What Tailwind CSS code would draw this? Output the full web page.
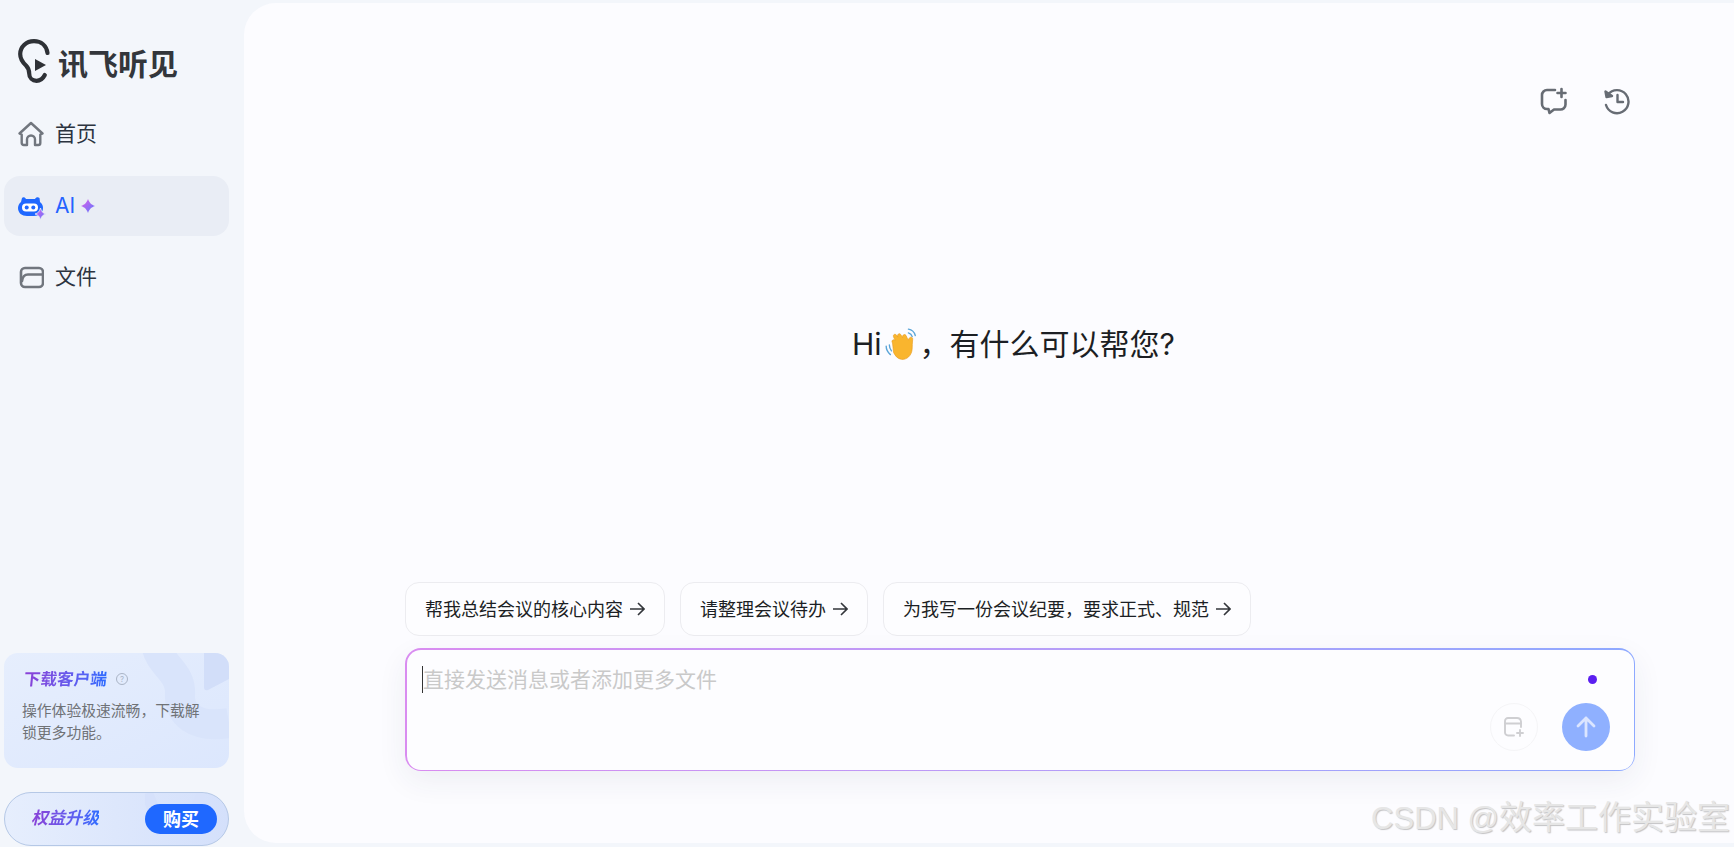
<!DOCTYPE html>
<html lang="zh-CN">
<head>
    <meta charset="UTF-8">
    <meta name="viewport" content="width=device-width, initial-scale=1.0">
    <title>讯飞听见</title>
    <script src="https://cdn.jsdelivr.net/npm/@tailwindcss/browser@4"></script>
</head>
<body class="bg-[#f3f6fb] font-['Inter','Noto_Sans_CJK_SC',sans-serif] overflow-hidden">
    <svg width="0" height="0" class="absolute">
        <defs>
            <linearGradient id="spark" x1="0" y1="0" x2="1" y2="1">
                <stop offset="0" stop-color="#e25be8"/>
                <stop offset="1" stop-color="#5a7bff"/>
            </linearGradient>
        </defs>
    </svg>

    <div class="relative flex h-[847px] w-[1734px]">
        <!-- Sidebar -->
        <aside class="flex w-[244px] shrink-0 flex-col pl-[4px] pr-[15px]">
            <div class="flex h-[44px] mt-[39px] items-center pl-[14px]">
                <svg class="h-[44px] w-[32px] shrink-0" viewBox="0 0 32 44" fill="none">
                    <path d="M29.5 14 C28.5 6.5 23 2.2 16 2.2 C8 2.2 2.2 8 2.2 15 C2.2 20 4.8 23.5 8 26.5 C10.5 29 11.2 31 11.2 34.5 C11.2 39 14.5 41.8 18.5 41.8 C22 41.8 25 39.5 26.8 36" stroke="#2e3136" stroke-width="4.2" stroke-linecap="round"/>
                    <path d="M17 20 L28 26 L17 32 Z" fill="#2e3136"/>
                </svg>
                <span class="ml-[8px] mt-[5px] text-[30px] leading-none font-bold text-[#33363b] whitespace-nowrap">讯飞听见</span>
            </div>

            <nav class="mt-[21px] flex flex-col">
                <a class="flex h-[60px] items-center pl-[14px] text-[21px] text-[#2c3440]">
                    <svg class="h-[26px] w-[26px] shrink-0" viewBox="0 0 26 26" fill="none" stroke="#71767e" stroke-width="2.4" stroke-linejoin="round" stroke-linecap="round">
                        <path d="M1.5 12.5 L13 2 L24.5 12.5 L22.3 13.6 V22 A2 2 0 0 1 20.3 24 H17 V18.5 A4 4 0 0 0 9 18.5 V24 H5.7 A2 2 0 0 1 3.7 22 V13.6 Z"/>
                    </svg>
                    <span class="ml-[11px]">首页</span>
                </a>
                <a class="mt-[12px] flex h-[60px] items-center rounded-[16px] bg-[#e9edf5] pl-[14px] text-[21px] text-[#2563ff]">
                    <svg class="h-[28px] w-[28px] shrink-0" viewBox="0 0 28 28">
                        <path d="M4 6 C5 4.5 7 5 8 7 H17 C18 5 20 4.5 21.5 6 L22 10 C24.5 12 25 14 25 16 C25 21 21 24 16 24 H9 C4 24 0 21 0 16 C0 14 1 11.5 3 10 Z" fill="#1f68ff"/>
                        <rect x="4" y="11.5" width="16" height="8" rx="4" fill="#fff"/>
                        <circle cx="8.7" cy="15.5" r="2" fill="#1f68ff"/>
                        <circle cx="15.3" cy="15.5" r="2" fill="#1f68ff"/>
                        <path d="M22.5 16 C23.5 19.5 24.5 21 28 22 C24.5 23 23.5 24.5 22.5 28 C21.5 24.5 20.5 23 17 22 C20.5 21 21.5 19.5 22.5 16 Z" fill="url(#spark)" stroke="#e9edf5" stroke-width=".8"/>
                    </svg>
                    <span class="ml-[9px]">AI</span>
                    <svg class="ml-[6px] h-[14px] w-[14px]" viewBox="0 0 14 14">
                        <path d="M7 0 C8.6 4 10 5.4 14 7 C10 8.6 8.6 10 7 14 C5.4 10 4 8.6 0 7 C4 5.4 5.4 4 7 0 Z" fill="url(#spark)"/>
                    </svg>
                </a>
                <a class="mt-[11px] flex h-[60px] items-center pl-[14px] text-[21px] text-[#2c3440]">
                    <svg class="h-[26px] w-[26px] shrink-0" viewBox="0 0 26 26" fill="none" stroke="#71767e" stroke-width="2.6" stroke-linejoin="round" stroke-linecap="round">
                        <rect x="3" y="4" width="22" height="19" rx="4"/>
                        <path d="M4 17 C4.5 13 6.5 10.5 10 10.5 H24"/>
                    </svg>
                    <span class="ml-[11px]">文件</span>
                </a>
            </nav>

            <!-- Download promo -->
            <div class="relative mt-auto h-[115px] overflow-hidden rounded-[14px] bg-linear-to-br from-[#e6eefd] to-[#dce7fd] pl-[19px] pt-[14px]">
                <svg class="absolute left-0 top-0 h-[115px] w-[225px]" viewBox="0 0 225 115" fill="none">
                    <path d="M152 -10 C154 12 178 18 176 42 C175 60 190 76 225 70" stroke="#d9e4fb" stroke-width="30"/>
                    <path d="M200 0 H225 V26 L204 37 Q200 38 200 34 Z" fill="#d2def9"/>
                </svg>
                <div class="relative flex items-center pl-[1px]">
                    <span class="inline-block -skew-x-6 bg-linear-to-r from-[#8a3fd6] to-[#2b6cff] bg-clip-text text-[16.6px] leading-[24px] font-bold text-transparent">下载客户端</span>
                    <span class="ml-[9px] flex h-[12px] w-[12px] items-center justify-center rounded-full border border-[#aab4c6] text-[8px] leading-none text-[#aab4c6]">?</span>
                </div>
                <p class="relative -ml-[1px] mt-[9px] w-[190px] text-[14.8px] leading-[22px] text-[#6f7276]">操作体验极速流畅，下载解锁更多功能。</p>
            </div>

            <!-- Upgrade pill -->
            <div class="relative mt-[24px] mb-[1px] flex h-[54px] items-center overflow-hidden rounded-full border border-[#b5c8e6] bg-linear-to-r from-[#e6eefd] to-[#d4e0fb] pl-[26px]">
                <svg class="absolute left-[140px] top-0 h-[52px] w-[60px]" viewBox="0 0 60 52" fill="none">
                    <path d="M2 0 L18 40 M58 0 L40 40" stroke="#d6e1fb" stroke-width="12"/>
                </svg>
                <span class="relative bg-linear-to-r from-[#8a3fd6] to-[#2b6cff] bg-clip-text text-[17px] font-bold text-transparent italic">权益升级</span>
                <span class="absolute right-[11px] top-[11px] flex h-[30px] w-[72px] items-center justify-center rounded-full bg-[#1f68ff] text-[18px] font-bold text-white">购买</span>
            </div>
        </aside>

        <!-- Main panel -->
        <main class="mt-[3px] mb-[4px] flex flex-1 flex-col rounded-l-[32px] bg-[#fcfcff] pl-[161px] pr-[99px]">
            <div class="flex justify-end gap-[35px] pt-[84px] pr-[4px]">
                <svg class="h-[28px] w-[28px]" viewBox="0 0 28 28" fill="none" stroke="#676c74" stroke-width="2.6" stroke-linecap="round" stroke-linejoin="round">
                    <path d="M15 3 H7 A5 5 0 0 0 2 8 V17 A5 5 0 0 0 7 22 H8.5 L9.5 26 L14 22.5 H20 A5 5 0 0 0 25.5 17.5 V13"/>
                    <path d="M21.5 2 V10 M17.5 6 H25.5"/>
                </svg>
                <svg class="h-[28px] w-[28px]" viewBox="0 0 28 28" fill="none" stroke="#676c74" stroke-width="2.4" stroke-linecap="round" stroke-linejoin="round">
                    <path d="M5 7.5 A11.5 11.5 0 1 1 3 18"/>
                    <path d="M2.5 4.5 L3.5 10 L9 9 Z" fill="#676c74"/>
                    <path d="M14.5 8 V15 H20"/>
                </svg>
            </div>

            <div class="mt-[207px] flex h-[44px] items-center justify-center pr-[13px] text-[30px] leading-none text-[#1c1f24]">
                <span>Hi</span>
                <svg class="ml-[1px] h-[36px] w-[36px]" viewBox="0 0 34 34" fill="none">
                    <path d="M3 19 C3 22 4.5 25 7 27 M6 18 C6 20 6.8 22 8 23.5" stroke="#5aa5d8" stroke-width="1.3" stroke-linecap="round"/>
                    <path d="M24 3 C27 3.5 29.5 5.5 30.5 9 M24 6.5 C25.8 7 27 8 27.6 10" stroke="#5aa5d8" stroke-width="1.3" stroke-linecap="round"/>
                    <path d="M9 16 C7.5 14 9.5 12 11.5 13.5 L10 10.5 C9 8 11.8 6.8 13 9 L14 10.5 C13 7.5 15.8 6 17 8.5 L18.5 11 C18 8 21 7 22 9.5 C23 11.5 23.2 12.5 24 13 C25 9.5 28.5 10 28 13 C27.5 16 27.8 19 27.5 22 C27 28 22.5 32 17.5 31.5 C13.5 31 11.5 28 10 25 Z" fill="#f9b52e" stroke="#e89a1c" stroke-width=".6"/>
                </svg>
                <span class="ml-[1px]">，有什么可以帮您?</span>
            </div>

            <div class="mt-[216px] flex gap-[15px]">
                <button class="flex h-[54px] items-center rounded-[14px] border border-[#ececf0] bg-[#fdfdff] pl-[19px] pr-[19px] text-[18px] whitespace-nowrap text-[#1c1f24]">帮我总结会议的核心内容
                    <svg class="ml-[6px] h-[16px] w-[16px]" viewBox="0 0 16 16" fill="none" stroke="#33363b" stroke-width="1.6"><path d="M1 8 H15 M9 2 L15 8 L9 14"/></svg>
                </button>
                <button class="flex h-[54px] items-center rounded-[14px] border border-[#ececf0] bg-[#fdfdff] pl-[19px] pr-[19px] text-[18px] whitespace-nowrap text-[#1c1f24]">请整理会议待办
                    <svg class="ml-[6px] h-[16px] w-[16px]" viewBox="0 0 16 16" fill="none" stroke="#33363b" stroke-width="1.6"><path d="M1 8 H15 M9 2 L15 8 L9 14"/></svg>
                </button>
                <button class="flex h-[54px] items-center rounded-[14px] border border-[#ececf0] bg-[#fdfdff] pl-[19px] pr-[19px] text-[18px] whitespace-nowrap text-[#1c1f24]">为我写一份会议纪要，要求正式、规范
                    <svg class="ml-[6px] h-[16px] w-[16px]" viewBox="0 0 16 16" fill="none" stroke="#33363b" stroke-width="1.6"><path d="M1 8 H15 M9 2 L15 8 L9 14"/></svg>
                </button>
            </div>

            <!-- Input box with gradient border -->
            <div class="mt-[12px] h-[123px] rounded-[16px] bg-linear-to-r from-[#d98cf0] to-[#8ea9ff] pt-[2px] pb-[1px] pl-[2px] pr-[1px] shadow-[0_10px_30px_rgba(40,50,90,0.07)]">
                <div class="relative h-full rounded-[14px] bg-[#fdfdff]">
                    <div class="absolute left-[15px] top-[16px] h-[27px] w-[1px] bg-[#333]"></div>
                    <p class="pl-[16px] pt-[16px] text-[21px] leading-[28px] text-[#c9c9c9]">直接发送消息或者添加更多文件</p>
                    <span class="absolute right-[37px] top-[25px] h-[9px] w-[9px] rounded-full bg-[#5b1ff0]"></span>
                    <div class="absolute right-[24px] top-[53px] flex gap-[24px]">
                        <span class="flex h-[48px] w-[48px] items-center justify-center rounded-full border border-[#f5f5f7]">
                            <svg class="h-[22px] w-[22px]" viewBox="0 0 22 22" fill="none" stroke="#cfcfd2" stroke-width="1.9" stroke-linecap="round" stroke-linejoin="round">
                                <path d="M11 19.5 H5 A3 3 0 0 1 2 16.5 V5 A3 3 0 0 1 5 2 H14 A4 4 0 0 1 18 5.5 V11"/>
                                <path d="M2 7.5 H18"/>
                                <path d="M17 14 V20 M14 17 H20"/>
                            </svg>
                        </span>
                        <span class="flex h-[48px] w-[48px] items-center justify-center rounded-full bg-[#8fb0ff]">
                            <svg class="h-[24px] w-[24px]" viewBox="0 0 24 24" fill="none" stroke="#dbe5ff" stroke-width="2.8" stroke-linecap="round" stroke-linejoin="round">
                                <path d="M12 21 V3 M4 11 L12 3 L20 11"/>
                            </svg>
                        </span>
                    </div>
                </div>
            </div>
        </main>

        <!-- Watermark -->
        <div class="absolute right-[4px] top-[796px] font-['Liberation_Sans','Noto_Sans_CJK_SC',sans-serif] text-[33px] leading-[44px] whitespace-nowrap text-[#e6e6e6] [text-shadow:1px_1px_1px_rgba(110,110,110,0.4)]"><span class="text-[31px]">CSDN @</span>效率工作实验室</div>
    </div>
</body>
</html>
